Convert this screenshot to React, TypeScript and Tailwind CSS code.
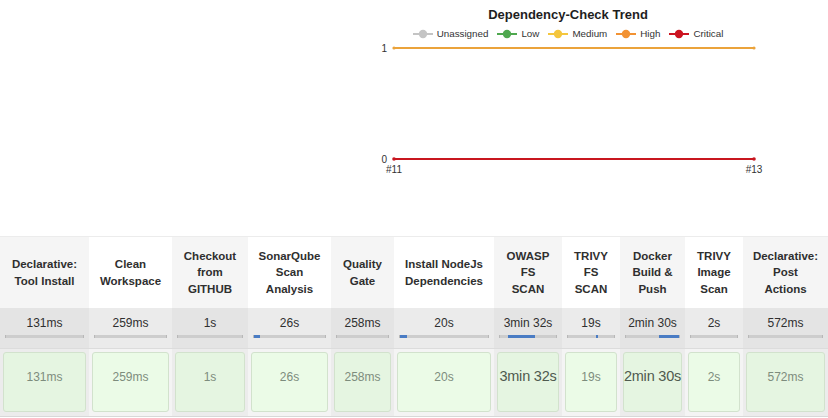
import React from 'react';

type Stage = {
  name: string[];
  time: string;
  w: string;
  fill?: [number, number];
  big?: boolean;
};

const stages: Stage[] = [
  { name: ['Declarative:', 'Tool Install'], time: '131ms', w: 'w-[89px]' },
  { name: ['Clean', 'Workspace'], time: '259ms', w: 'w-[83px]' },
  { name: ['Checkout', 'from', 'GITHUB'], time: '1s', w: 'w-[76px]' },
  { name: ['SonarQube', 'Scan', 'Analysis'], time: '26s', w: 'w-[83px]', fill: [0, 9] },
  { name: ['Quality', 'Gate'], time: '258ms', w: 'w-[63px]' },
  { name: ['Install NodeJs', 'Dependencies'], time: '20s', w: 'w-[100px]', fill: [0, 8] },
  { name: ['OWASP', 'FS', 'SCAN'], time: '3min 32s', w: 'w-[68px]', fill: [15, 47], big: true },
  { name: ['TRIVY', 'FS', 'SCAN'], time: '19s', w: 'w-[58px]', fill: [60, 6] },
  { name: ['Docker', 'Build &', 'Push'], time: '2min 30s', w: 'w-[65px]', fill: [63, 37], big: true },
  { name: ['TRIVY', 'Image', 'Scan'], time: '2s', w: 'w-[58px]' },
  { name: ['Declarative:', 'Post', 'Actions'], time: '572ms', w: 'w-[85px]' },
];

const legend = [
  { label: 'Unassigned', color: '#c4c4c4' },
  { label: 'Low', color: '#4fa84f' },
  { label: 'Medium', color: '#f4c63d' },
  { label: 'High', color: '#f29233' },
  { label: 'Critical', color: '#cc1420' },
];

function TrendChart() {
  return (
    <div className="ml-[368px] w-[400px] flex flex-col items-center">
      <div className="pt-[7px] text-[13px] leading-[16px] font-bold text-[#1e1e1e]">Dependency-Check Trend</div>
      <div className="mt-[5px] flex items-center gap-[9px] text-[9.8px] leading-[12px] text-[#333]">
        {legend.map((l) => (
          <div key={l.label} className="flex items-center gap-[4px]">
            <svg width="20" height="10" viewBox="0 0 20 10">
              <line x1="0" y1="5" x2="20" y2="5" stroke={l.color} strokeWidth="2" />
              <circle cx="10" cy="5" r="4.2" fill={l.color} />
            </svg>
            <span>{l.label}</span>
          </div>
        ))}
      </div>
      <svg width="400" height="140" viewBox="0 0 400 140" className="mt-[2px]" style={{ fontFamily: '"Liberation Sans", Arial, sans-serif' }}>
        <text x="19" y="9.5" fontSize="10" textAnchor="end" fill="#333">1</text>
        <line x1="26" y1="6" x2="386" y2="6" stroke="#eba33b" strokeWidth="2" />
        <circle cx="26" cy="6" r="1.6" fill="#eba33b" />
        <circle cx="386" cy="6" r="1.6" fill="#eba33b" />
        <text x="19" y="120.5" fontSize="10" textAnchor="end" fill="#333">0</text>
        <line x1="26" y1="117" x2="386" y2="117" stroke="#c8161f" strokeWidth="2" />
        <circle cx="26" cy="117" r="1.8" fill="#c8161f" />
        <circle cx="386" cy="117" r="1.8" fill="#c8161f" />
        <text x="26" y="131" fontSize="10" textAnchor="middle" fill="#333">#11</text>
        <text x="386" y="131" fontSize="10" textAnchor="middle" fill="#333">#13</text>
      </svg>
    </div>
  );
}

function StageColumn({ s, odd }: { s: Stage; odd: boolean }) {
  return (
    <div className={`${s.w} flex flex-col shrink-0`}>
      <div
        className={`h-[72px] flex items-center justify-center text-center px-[2px] text-[11.5px] leading-[16.5px] font-bold text-[#2f2f2f] border-t border-[#ececec] ${
          odd ? 'bg-[#f5f5f5]' : 'bg-white'
        }`}
      >
        <div>
          {s.name.map((n, i) => (
            <div key={i} className="whitespace-nowrap">{n}</div>
          ))}
        </div>
      </div>
      <div
        className={`h-[41px] flex flex-col items-center pt-[7px] px-[5px] border-b border-[#dcdcdc] ${
          odd ? 'bg-[#e4e4e4]' : 'bg-[#ebebeb]'
        }`}
      >
        <div className="text-[12px] leading-[16px] text-[#2f2f2f] whitespace-nowrap">{s.time}</div>
        <div className="relative mt-[4px] w-full h-[3px] bg-[#cdcdcd] border-x border-[#b8b8b8]">
          {s.fill && (
            <div
              className="absolute top-0 h-[3px] bg-[#4a7cc4]"
              style={{ left: `${s.fill[0]}%`, width: `${s.fill[1]}%` }}
            />
          )}
        </div>
      </div>
      <div className={`h-[68px] p-[3px] pb-[4px] border-b border-[#d8d8d8] ${odd ? 'bg-[#ececec]' : 'bg-[#f4f4f4]'}`}>
        <div
          className={`h-full rounded-[3px] border border-[#d2e2cd] flex items-center justify-center pb-[10px] overflow-visible ${
            odd ? 'bg-[#e5f5e1]' : 'bg-[#ebfbe7]'
          }`}
        >
          <span
            className={`whitespace-nowrap ${
              s.big ? 'text-[14.5px] tracking-[-0.2px] text-[#4f5a4f]' : 'text-[12px] text-[#7d8c7d]'
            }`}
          >
            {s.time}
          </span>
        </div>
      </div>
    </div>
  );
}

export default function App() {
  return (
    <div className="w-[828px] h-[418px] bg-white overflow-hidden" style={{ fontFamily: '"Liberation Sans", Arial, sans-serif' }}>
      <div className="h-[236px]">
        <TrendChart />
      </div>
      <div className="flex">
        {stages.map((s, i) => (
          <StageColumn key={i} s={s} odd={i % 2 === 0} />
        ))}
      </div>
    </div>
  );
}
